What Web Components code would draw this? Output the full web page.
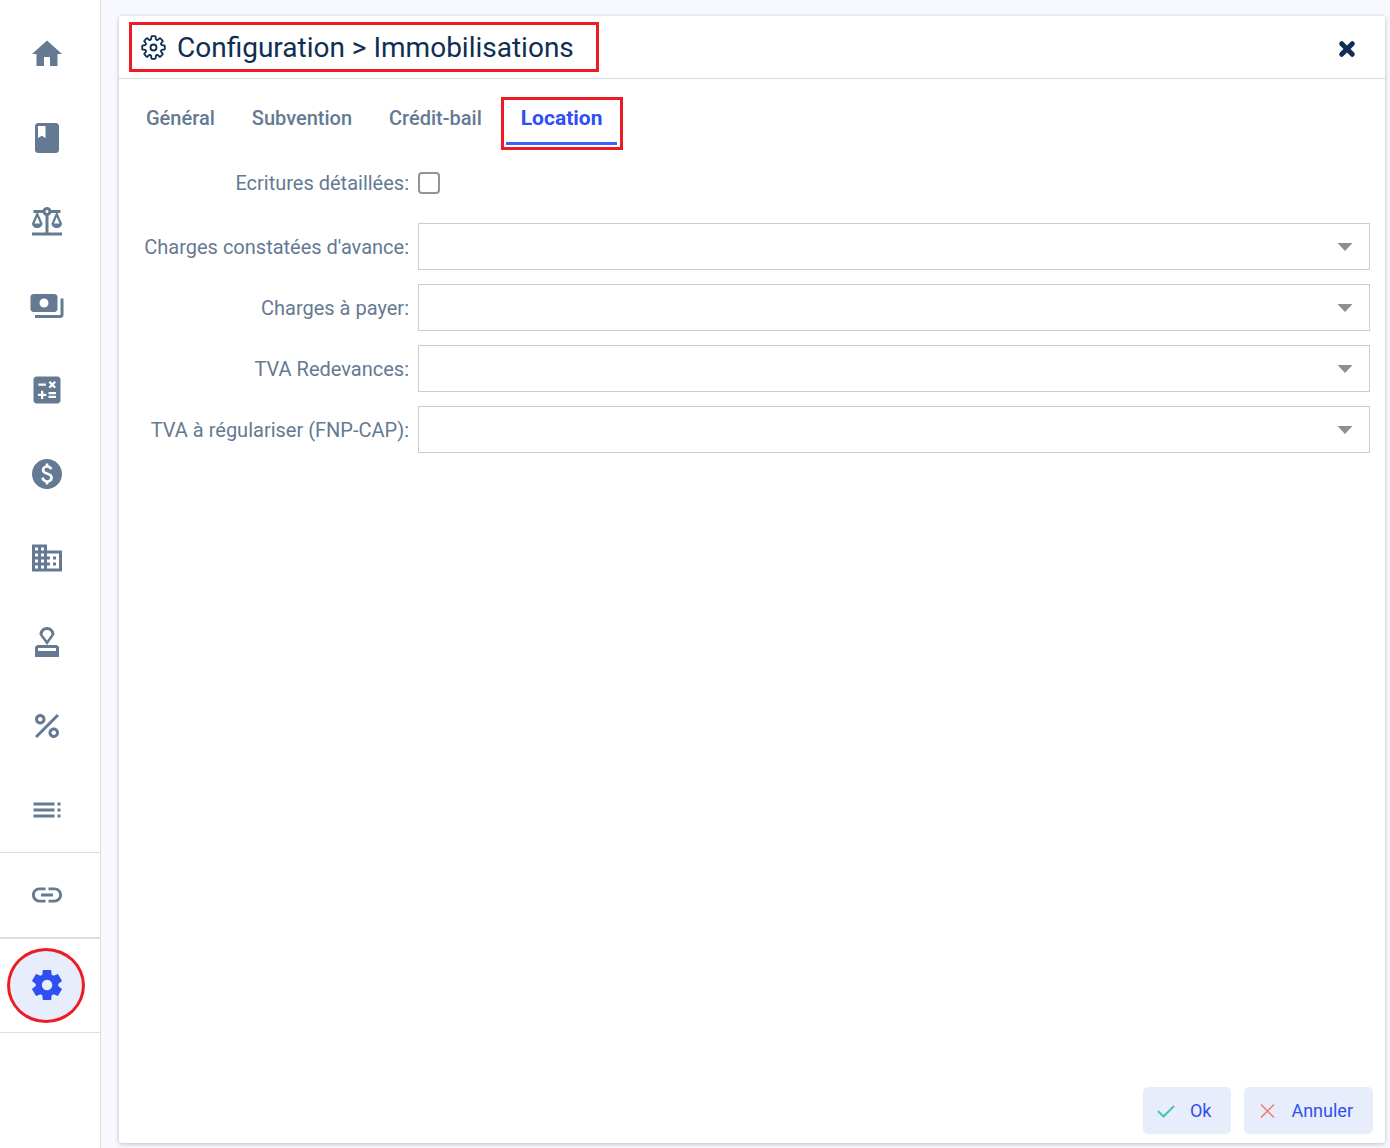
<!DOCTYPE html>
<html lang="fr">
<head>
<meta charset="utf-8">
<meta name="viewport" content="width=device-width, initial-scale=1">
<title>Configuration - Immobilisations</title>
<style>
    body {
        margin: 0;
        font-family: Roboto, "Liberation Sans", sans-serif;
        background: #f8f9fe;
        --ink: #0f2e53;
        --muted: #647a93;
        --accent: #2f4ff5;
        --soft: #e8edfb;
        --line: #dedede;
        --mark: #ed1c24;
    }
</style>
</head>
<body>
<app-shell>
    <side-bar slot="nav">
        <nav-item icon="home" label="Accueil"></nav-item>
        <nav-item icon="book" label="Journaux"></nav-item>
        <nav-item icon="balance" label="Balance"></nav-item>
        <nav-item icon="payments" label="Paiements"></nav-item>
        <nav-item icon="calculate" label="Calculs"></nav-item>
        <nav-item icon="paid" label="Devises"></nav-item>
        <nav-item icon="business" label="Immobilisations"></nav-item>
        <nav-item icon="approval" label="Validation"></nav-item>
        <nav-item icon="percent" label="Taux"></nav-item>
        <nav-item icon="toc" label="Listes"></nav-item>
        <nav-item slot="links" icon="link" label="Liens"></nav-item>
        <nav-item slot="settings" icon="settings" label="Configuration" active></nav-item>
    </side-bar>
    <config-panel>
        <span slot="title">Configuration &gt; Immobilisations</span>
        <tab-bar slot="tabs">
            <tab-item>Général</tab-item>
            <tab-item>Subvention</tab-item>
            <tab-item>Crédit-bail</tab-item>
            <tab-item active>Location</tab-item>
        </tab-bar>
        <check-field label="Ecritures détaillées:"></check-field>
        <select-field label="Charges constatées d'avance:"></select-field>
        <select-field label="Charges à payer:"></select-field>
        <select-field label="TVA Redevances:"></select-field>
        <select-field label="TVA à régulariser (FNP-CAP):"></select-field>
        <action-button slot="actions" icon="ok">Ok</action-button>
        <action-button slot="actions" icon="cancel">Annuler</action-button>
    </config-panel>
</app-shell>

<script>
const ICONS = {
    home: 'M10 20v-6h4v6h5v-8h3L12 3 2 12h3v8z',
    book: 'M18 2H6c-1.1 0-2 .9-2 2v16c0 1.1.9 2 2 2h12c1.1 0 2-.9 2-2V4c0-1.1-.9-2-2-2zM6 4h5v8l-2.5-1.5L6 12V4z',
    balance: 'M13 7.83c.85-.3 1.53-.98 1.83-1.83H18l-3 7c0 1.66 1.57 3 3.5 3s3.5-1.34 3.5-3l-3-7h2V4h-6.17C14.42 2.83 13.31 2 12 2S9.58 2.83 9.17 4H3v2h2l-3 7c0 1.66 1.57 3 3.5 3S9 14.66 9 13L6 6h3.17c.3.85.98 1.53 1.83 1.83V19H2v2h20v-2h-9V7.83zM20.37 13h-3.74l1.87-4.36L20.37 13zm-13 0H3.63L5.5 8.64 7.37 13zM12 6c-.55 0-1-.45-1-1s.45-1 1-1 1 .45 1 1-.45 1-1 1z',
    payments: 'M19 14V6c0-1.1-.9-2-2-2H3c-1.1 0-2 .9-2 2v8c0 1.1.9 2 2 2h14c1.1 0 2-.9 2-2zm-9-1c-1.66 0-3-1.34-3-3s1.34-3 3-3 3 1.34 3 3-1.34 3-3 3zm13-6v11c0 1.1-.9 2-2 2H4v-2h17V7h2z',
    calculate: 'M19 3H5c-1.1 0-2 .9-2 2v14c0 1.1.9 2 2 2h14c1.1 0 2-.9 2-2V5c0-1.1-.9-2-2-2zm-5.97 4.06L14.09 6l1.41 1.41L16.91 6l1.06 1.06-1.41 1.41 1.41 1.41-1.06 1.06-1.41-1.4-1.41 1.41-1.06-1.06 1.41-1.41-1.41-1.42zm-6.78.66h5v1.5h-5v-1.5zM11.5 16h-2v2H8v-2H6v-1.5h2v-2h1.5v2h2V16zm6.5 1.25h-5v-1.5h5v1.5zm0-2.5h-5v-1.5h5v1.5z',
    paid: 'M12 2C6.48 2 2 6.48 2 12s4.48 10 10 10 10-4.48 10-10S17.52 2 12 2zm.88 15.76V19h-1.75v-1.29c-.74-.18-2.39-.77-3.02-2.96l1.65-.67c.06.22.58 2.09 2.4 2.09.93 0 1.98-.48 1.98-1.61 0-.96-.7-1.46-2.28-2.03-1.1-.39-3.35-1.03-3.35-3.31 0-.1.01-2.4 2.62-2.96V5h1.75v1.24c1.84.32 2.51 1.79 2.66 2.23l-1.58.67c-.11-.35-.59-1.34-1.9-1.34-.7 0-1.81.37-1.81 1.39 0 .95.86 1.31 2.64 1.9 2.4.83 3.01 2.05 3.01 3.45 0 2.63-2.5 3.13-3.02 3.22z',
    business: 'M12 7V3H2v18h20V7H12zM6 19H4v-2h2v2zm0-4H4v-2h2v2zm0-4H4V9h2v2zm0-4H4V5h2v2zm4 12H8v-2h2v2zm0-4H8v-2h2v2zm0-4H8V9h2v2zm0-4H8V5h2v2zm10 12h-8v-2h2v-2h-2v-2h2v-2h-2V9h8v10zm-2-8h-2v2h2v-2zm0 4h-2v2h2v-2z',
    approval: 'M4 16v6h16v-6c0-1.1-.9-2-2-2H6c-1.1 0-2 .9-2 2zm14 2H6v-2h12v2zM12 2C9.24 2 7 4.24 7 7l5 7 5-7c0-2.76-2.24-5-5-5zm0 9L9 7c0-1.66 1.34-3 3-3s3 1.34 3 3l-3 4z',
    percent: 'M7.5 4C5.57 4 4 5.57 4 7.5S5.57 11 7.5 11 11 9.43 11 7.5 9.43 4 7.5 4zm0 5C6.67 9 6 8.33 6 7.5S6.67 6 7.5 6 9 6.67 9 7.5 8.33 9 7.5 9zM16.5 13c-1.93 0-3.5 1.57-3.5 3.5s1.57 3.5 3.5 3.5 3.5-1.57 3.5-3.5-1.57-3.5-3.5-3.5zm0 5c-.83 0-1.5-.67-1.5-1.5s.67-1.5 1.5-1.5 1.5.67 1.5 1.5-.67 1.5-1.5 1.5zM5.41 20L4 18.59 18.59 4 20 5.41z',
    toc: 'M3 9h14V7H3v2zm0 4h14v-2H3v2zm0 4h14v-2H3v2zm16 0h2v-2h-2v2zm0-10v2h2V7h-2zm0 6h2v-2h-2v2z',
    link: 'M3.9 12c0-1.71 1.39-3.1 3.1-3.1h4V7H7c-2.76 0-5 2.24-5 5s2.24 5 5 5h4v-1.9H7c-1.71 0-3.1-1.39-3.1-3.1zM8 13h8v-2H8v2zm9-6h-4v1.9h4c1.71 0 3.1 1.39 3.1 3.1s-1.39 3.1-3.1 3.1h-4V17h4c2.76 0 5-2.24 5-5s-2.24-5-5-5z',
    settings: 'm9.25 22-.4-3.2q-.325-.125-.612-.3-.288-.175-.563-.375L4.7 19.375l-2.75-4.75 2.575-1.95Q4.5 12.5 4.5 12.338v-.675q0-.163.025-.338L1.95 9.375l2.75-4.75 2.975 1.25q.275-.2.575-.375.3-.175.6-.3l.4-3.2h5.5l.4 3.2q.325.125.613.3.287.175.562.375l2.975-1.25 2.75 4.75-2.575 1.95q.025.175.025.338v.674q0 .163-.05.338l2.575 1.95-2.75 4.75-2.95-1.25q-.275.2-.575.375-.3.175-.6.3l-.4 3.2Zm2.8-6.5q1.45 0 2.475-1.025Q15.55 13.45 15.55 12q0-1.45-1.025-2.475Q13.5 8.5 12.05 8.5q-1.475 0-2.488 1.025Q8.55 10.55 8.55 12q0 1.45 1.012 2.475Q10.575 15.5 12.05 15.5Z'
};

class AppShell extends HTMLElement {
    connectedCallback() {
        this.attachShadow({ mode: 'open' });
        this.shadowRoot.innerHTML = `
            <style>
                :host {
                    display: flex;
                    min-height: 100vh;
                }

                main {
                    flex: 1;
                    display: flex;
                    min-width: 0;
                    padding: 16px 5px 5px 18px;
                }
            </style>

            <slot name="nav"></slot>
            <main><slot></slot></main>
        `;
    }
}

class SideBar extends HTMLElement {
    connectedCallback() {
        this.attachShadow({ mode: 'open' });
        this.shadowRoot.innerHTML = `
            <style>
                :host {
                    display: block;
                    flex: none;
                    width: 100px;
                    background: #fff;
                    border-right: 1px solid var(--line);
                }

                .main {
                    padding-top: 12px;
                    border-bottom: 1px solid var(--line);
                }

                .links {
                    border-bottom: 2px solid var(--line);
                }

                .settings {
                    padding: 9px 0;
                    border-bottom: 1px solid var(--line);
                }
            </style>

            <nav>
                <div class="main"><slot></slot></div>
                <div class="links"><slot name="links"></slot></div>
                <div class="settings"><slot name="settings"></slot></div>
            </nav>
        `;
    }
}

class NavItem extends HTMLElement {
    connectedCallback() {
        const path = ICONS[this.getAttribute('icon')];
        this.attachShadow({ mode: 'open' });
        this.shadowRoot.innerHTML = `
            <style>
                :host {
                    display: flex;
                    justify-content: center;
                    align-items: center;
                    height: 84px;
                    padding-right: 6px;
                    color: var(--muted);
                }

                a {
                    display: flex;
                    justify-content: center;
                    align-items: center;
                    box-sizing: border-box;
                    color: inherit;
                }

                svg {
                    width: 36px;
                    height: 36px;
                    fill: currentColor;
                }

                :host([active]) {
                    height: 75px;
                    padding-right: 8px;
                    color: var(--accent);
                }

                :host([active]) a {
                    width: 78px;
                    height: 75px;
                    padding: 0 0 1px 2px;
                    background: var(--soft);
                    border: 3px solid var(--mark);
                    border-radius: 50%;
                }
            </style>

            <a href="#" aria-label="${this.getAttribute('label')}">
                <svg viewBox="0 0 24 24"><path fill-rule="evenodd" d="${path}"/></svg>
            </a>
        `;
    }
}

class ConfigPanel extends HTMLElement {
    connectedCallback() {
        // One tooth of the gear, repeated every 45 degrees
        const teeth = [0, 45, 90, 135, 180, 225, 270, 315].map(angle =>
            `<path transform="rotate(${angle})" d="M-3.2-7.7 Q-2.2-7.9-2.2-9.2 V-10.6 Q-2.2-11.3-1.5-11.3 H1.5 Q2.2-11.3 2.2-10.6 V-9.2 Q2.2-7.9 3.2-7.7"/>`
        ).join('');

        this.attachShadow({ mode: 'open' });
        this.shadowRoot.innerHTML = `
            <style>
                :host {
                    display: flex;
                    flex: 1;
                    flex-direction: column;
                    min-width: 0;
                    background: #fff;
                    border-radius: 2px;
                    box-shadow: 0 1px 4px rgba(0, 0, 0, 0.25);
                }

                header {
                    display: flex;
                    justify-content: space-between;
                    align-items: center;
                    padding: 6px 28px 6px 10px;
                    border-bottom: 1px solid #d5dae1;
                    color: var(--ink);
                }

                h1 {
                    display: flex;
                    align-items: center;
                    gap: 11px;
                    box-sizing: border-box;
                    height: 50px;
                    margin: 0;
                    padding: 1px 22px 0 9px;
                    border: 3px solid var(--mark);
                    font-size: 28px;
                    font-weight: 400;
                    line-height: 32px;
                }

                .gear {
                    width: 25px;
                    height: 25px;
                    fill: none;
                    stroke: currentColor;
                    stroke-width: 1.8;
                    stroke-linecap: round;
                }

                .close {
                    display: flex;
                    padding: 4px 0 0;
                    border: 0;
                    background: none;
                    color: inherit;
                    cursor: pointer;
                }

                .close svg {
                    width: 20px;
                    height: 20px;
                    stroke: currentColor;
                    stroke-width: 5;
                    stroke-linecap: round;
                }

                .fields {
                    flex: 1;
                    display: flex;
                    flex-direction: column;
                    gap: 14px;
                    padding: 11px 15px 0 16px;
                }

                footer {
                    display: flex;
                    justify-content: flex-end;
                    gap: 13px;
                    padding: 9px 12px;
                }
            </style>

            <header>
                <h1>
                    <svg class="gear" viewBox="-12.5 -12.5 25 25">
                        ${teeth}
                        <circle r="3"/>
                    </svg>
                    <slot name="title"></slot>
                </h1>
                <button class="close" type="button" aria-label="Fermer">
                    <svg viewBox="0 0 20 20"><path d="M4.700 4.700L15.300 15.300M15.300 4.700L4.700 15.300"/></svg>
                </button>
            </header>
            <slot name="tabs"></slot>
            <section class="fields"><slot></slot></section>
            <footer><slot name="actions"></slot></footer>
        `;
    }
}

class TabBar extends HTMLElement {
    connectedCallback() {
        this.attachShadow({ mode: 'open' });
        this.shadowRoot.innerHTML = `
            <style>
                :host {
                    display: flex;
                    padding: 18px 9px 0;
                }
            </style>

            <slot></slot>
        `;
    }
}

class TabItem extends HTMLElement {
    connectedCallback() {
        this.attachShadow({ mode: 'open' });
        this.shadowRoot.innerHTML = `
            <style>
                :host {
                    display: block;
                    box-sizing: border-box;
                    height: 53px;
                    padding: 3px 4px 3px 3px;
                    color: var(--muted);
                }

                button {
                    box-sizing: border-box;
                    height: 45px;
                    padding: 0 15px 6px;
                    border: 0;
                    border-bottom: 3px solid transparent;
                    background: none;
                    color: inherit;
                    font: 500 20px/24px Roboto, "Liberation Sans", sans-serif;
                    cursor: pointer;
                }

                :host([active]) {
                    padding: 0 3px 0 2px;
                    border: 3px solid var(--mark);
                    color: var(--accent);
                }

                :host([active]) button {
                    border-bottom-color: #3565f6;
                    font-size: 21px;
                    font-weight: 700;
                }
            </style>

            <button type="button"><slot></slot></button>
        `;
    }
}

// Row layout shared by every kind of field
const FIELD_STYLE = `
    :host {
        display: grid;
        grid-template-columns: 274px minmax(0, 1fr);
        column-gap: 9px;
        align-items: center;
        color: var(--muted);
        font-size: 20px;
        line-height: 24px;
    }

    label {
        text-align: right;
        white-space: nowrap;
    }
`;

class CheckField extends HTMLElement {
    connectedCallback() {
        this.attachShadow({ mode: 'open' });
        this.shadowRoot.innerHTML = `
            <style>
                ${FIELD_STYLE}

                :host {
                    height: 44px;
                    margin-bottom: 4px;
                }

                input {
                    appearance: none;
                    box-sizing: border-box;
                    width: 22px;
                    height: 22px;
                    margin: 0;
                    border: 2px solid #949494;
                    border-radius: 4px;
                    background: #fff;
                }

                input:checked {
                    background: var(--accent);
                }
            </style>

            <label for="check">${this.getAttribute('label')}</label>
            <input id="check" type="checkbox">
        `;
    }
}

class SelectField extends HTMLElement {
    connectedCallback() {
        this.attachShadow({ mode: 'open' });
        this.shadowRoot.innerHTML = `
            <style>
                ${FIELD_STYLE}

                .box {
                    display: grid;
                    align-items: center;
                }

                .box > * {
                    grid-area: 1 / 1;
                }

                select {
                    appearance: none;
                    width: 100%;
                    height: 47px;
                    padding: 0 44px 0 12px;
                    border: 1px solid #ccc;
                    border-radius: 0;
                    background: #fff;
                    color: inherit;
                    font: inherit;
                }

                svg {
                    justify-self: end;
                    width: 16px;
                    height: 8px;
                    margin-right: 17px;
                    fill: #8f8f8f;
                    pointer-events: none;
                }
            </style>

            <label for="choice">${this.getAttribute('label')}</label>
            <div class="box">
                <select id="choice"><option value=""></option></select>
                <svg viewBox="0 0 16 8"><path d="M.5 0h15L8 8z"/></svg>
            </div>
        `;
    }
}

class ActionButton extends HTMLElement {
    connectedCallback() {
        const icon = this.getAttribute('icon') === 'ok'
            ? '<path stroke="#45c4c0" stroke-width="2" d="M1 9L6.500 14.500 17 4"/>'
            : '<path stroke="#f4776f" stroke-width="1.500" d="M3 2.500l13 13M16 2.500l-13 13"/>';

        this.attachShadow({ mode: 'open' });
        this.shadowRoot.innerHTML = `
            <style>
                :host {
                    display: block;
                }

                button {
                    display: flex;
                    align-items: center;
                    gap: 15px;
                    height: 47px;
                    padding: 0 20px 0 14px;
                    border: 0;
                    border-radius: 5px;
                    background: var(--soft);
                    color: var(--accent);
                    font: 400 18px/24px Roboto, "Liberation Sans", sans-serif;
                    cursor: pointer;
                }

                svg {
                    width: 18px;
                    height: 18px;
                    fill: none;
                }
            </style>

            <button type="button">
                <svg viewBox="0 0 18 18">${icon}</svg>
                <span><slot></slot></span>
            </button>
        `;
    }
}

customElements.define('app-shell', AppShell);
customElements.define('side-bar', SideBar);
customElements.define('nav-item', NavItem);
customElements.define('config-panel', ConfigPanel);
customElements.define('tab-bar', TabBar);
customElements.define('tab-item', TabItem);
customElements.define('check-field', CheckField);
customElements.define('select-field', SelectField);
customElements.define('action-button', ActionButton);
</script>
</body>
</html>
